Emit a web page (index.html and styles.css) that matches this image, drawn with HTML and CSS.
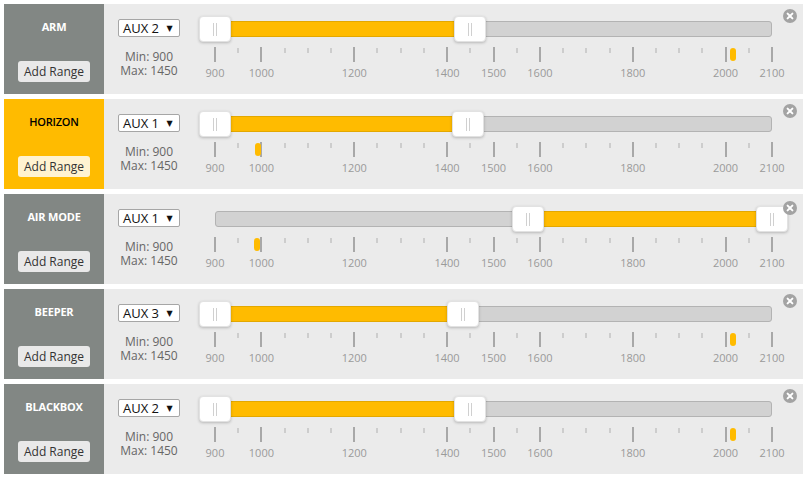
FILE: index.html
```html
<!DOCTYPE html>
<html>
<head>
<meta charset="utf-8">
<link rel="stylesheet" href="styles.css">
</head>
<body>
<div class="list">
  <div class="mode">
    <div class="info"><div class="name">ARM</div><button class="add">Add Range</button></div>
    <div class="chan"><div class="sel">AUX 2 <span class="arr">▼</span></div><div class="rng">Min: 900<br>Max: 1450</div></div>
    <div class="slider"><div class="scale" data-lo="900" data-hi="1450" data-val="2017"></div></div>
    <svg class="close" width="14" height="14" viewBox="0 0 14 14"><circle cx="7" cy="7" r="7" fill="#a3a3a3"/><path d="M4.6 4.6l4.8 4.8M9.4 4.6l-4.8 4.8" stroke="#fff" stroke-width="2" stroke-linecap="round"/></svg>
  </div>
  <div class="mode active">
    <div class="info"><div class="name">HORIZON</div><button class="add">Add Range</button></div>
    <div class="chan"><div class="sel">AUX 1 <span class="arr">▼</span></div><div class="rng">Min: 900<br>Max: 1450</div></div>
    <div class="slider"><div class="scale" data-lo="900" data-hi="1445" data-val="993"></div></div>
    <svg class="close" width="14" height="14" viewBox="0 0 14 14"><circle cx="7" cy="7" r="7" fill="#a3a3a3"/><path d="M4.6 4.6l4.8 4.8M9.4 4.6l-4.8 4.8" stroke="#fff" stroke-width="2" stroke-linecap="round"/></svg>
  </div>
  <div class="mode">
    <div class="info"><div class="name">AIR MODE</div><button class="add">Add Range</button></div>
    <div class="chan"><div class="sel">AUX 1 <span class="arr">▼</span></div><div class="rng">Min: 900<br>Max: 1450</div></div>
    <div class="slider"><div class="scale" data-lo="1575" data-hi="2100" data-val="990"></div></div>
    <svg class="close low" width="14" height="14" viewBox="0 0 14 14"><circle cx="7" cy="7" r="7" fill="#a3a3a3"/><path d="M4.6 4.6l4.8 4.8M9.4 4.6l-4.8 4.8" stroke="#fff" stroke-width="2" stroke-linecap="round"/></svg>
  </div>
  <div class="mode">
    <div class="info"><div class="name">BEEPER</div><button class="add">Add Range</button></div>
    <div class="chan"><div class="sel">AUX 3 <span class="arr">▼</span></div><div class="rng">Min: 900<br>Max: 1450</div></div>
    <div class="slider"><div class="scale" data-lo="900" data-hi="1435" data-val="2017"></div></div>
    <svg class="close" width="14" height="14" viewBox="0 0 14 14"><circle cx="7" cy="7" r="7" fill="#a3a3a3"/><path d="M4.6 4.6l4.8 4.8M9.4 4.6l-4.8 4.8" stroke="#fff" stroke-width="2" stroke-linecap="round"/></svg>
  </div>
  <div class="mode">
    <div class="info"><div class="name">BLACKBOX</div><button class="add">Add Range</button></div>
    <div class="chan"><div class="sel">AUX 2 <span class="arr">▼</span></div><div class="rng">Min: 900<br>Max: 1450</div></div>
    <div class="slider"><div class="scale" data-lo="900" data-hi="1450" data-val="2017"></div></div>
    <svg class="close" width="14" height="14" viewBox="0 0 14 14"><circle cx="7" cy="7" r="7" fill="#a3a3a3"/><path d="M4.6 4.6l4.8 4.8M9.4 4.6l-4.8 4.8" stroke="#fff" stroke-width="2" stroke-linecap="round"/></svg>
  </div>
</div>
<script src="script.js"></script>
</body>
</html>
```
FILE: styles.css
```css
body {
  margin: 0;
  padding: 4px 4px 0;
  background: #fff;
  font-family: "Open Sans", "DejaVu Sans", sans-serif;
}
.list {
  display: flex;
  flex-direction: column;
  gap: 5px;
  width: 799px;
}
.mode {
  display: flex;
  height: 90px;
  background: #ebebeb;
  position: relative;
}
.info {
  width: 100px;
  flex: none;
  background: #828784;
  display: flex;
  flex-direction: column;
  align-items: center;
  padding-top: 14px;
  box-sizing: border-box;
}
.mode.active .info { background: #ffbb00; }
.name {
  color: #fff;
  font-weight: 700;
  font-size: 11px;
  line-height: 18px;
  height: 18px;
  letter-spacing: -0.2px;
}
.mode.active .name { color: #000; font-weight: 600; }
.add {
  margin-top: 25px;
  height: 21px;
  padding: 0 6px;
  border: 0;
  border-radius: 3px;
  background: #e9e9e9;
  color: #333;
  font-family: "Open Sans", sans-serif;
  font-size: 12px;
  line-height: 21px;
}
.mode.active .add { background: #fff3d1; }
.chan {
  width: 90px;
  flex: none;
  display: flex;
  flex-direction: column;
  align-items: center;
  padding-top: 15px;
  box-sizing: border-box;
}
.sel {
  width: 62px;
  height: 18px;
  box-sizing: border-box;
  border: 1px solid #a6a6a6;
  border-radius: 2px;
  background: #fff;
  font-size: 13px;
  line-height: 16px;
  color: #111;
  padding-left: 4px;
  display: flex;
  align-items: center;
  white-space: pre;
}
.arr { font-size: 8px; margin-left: 4px; }
.rng {
  margin-top: 13px;
  font-size: 12px;
  line-height: 14px;
  color: #666;
  text-align: center;
}
.slider {
  flex: 1;
  padding-left: 21px;
}
.scale {
  position: relative;
  width: 557px;
  height: 90px;
}
.track {
  position: absolute;
  top: 17px;
  left: 0;
  right: 0;
  height: 16px;
  box-sizing: border-box;
  background: #d2d2d2;
  border: 1px solid #b3b3b3;
  border-radius: 3px;
}
.fill {
  position: absolute;
  top: 17px;
  height: 16px;
  box-sizing: border-box;
  background: #ffbb00;
  border-top: 1px solid #e3a800;
  border-bottom: 1px solid #e3a800;
}
.handle {
  position: absolute;
  top: 12px;
  width: 32px;
  height: 26px;
  margin-left: -16px;
  box-sizing: border-box;
  background: #fff;
  border: 1px solid #e2e2e2;
  border-radius: 4px;
  box-shadow: 0 1px 3px rgba(0, 0, 0, 0.22);
}
.handle::before,
.handle::after {
  content: "";
  position: absolute;
  top: 6px;
  width: 1px;
  height: 13px;
  background: #d0d0d0;
}
.handle::before { left: 13px; }
.handle::after { left: 16px; }
.tick {
  position: absolute;
  top: 43px;
  width: 2px;
  height: 15px;
  margin-left: -1px;
  background: #a8a8a8;
}
.tick.minor {
  top: 44px;
  width: 2px;
  height: 5px;
  background: #cdcdcd;
}
.lbl {
  position: absolute;
  top: 62px;
  font-size: 11px;
  line-height: 14px;
  color: #9a9a9a;
  transform: translateX(-50%);
}
.val {
  position: absolute;
  top: 44px;
  width: 6px;
  height: 13px;
  margin-left: -3px;
  border-radius: 3px;
  background: #ffbb00;
}
.close {
  position: absolute;
  top: 5px;
  right: 6px;
}
.close.low { top: 7px; }
```
FILE: script.js
```js
(function () {
  var majors = [900, 1000, 1200, 1400, 1500, 1600, 1800, 2000, 2100];
  function pct(v) { return ((v - 900) / 1200 * 100) + '%'; }
  function el(cls, left, text) {
    var d = document.createElement('div');
    d.className = cls;
    if (left !== null) d.style.left = left;
    if (text) d.textContent = text;
    return d;
  }
  document.querySelectorAll('.scale').forEach(function (s) {
    var lo = +s.dataset.lo, hi = +s.dataset.hi, val = +s.dataset.val;
    s.appendChild(el('track', null));
    var f = el('fill', pct(lo));
    f.style.width = ((hi - lo) / 1200 * 100) + '%';
    s.appendChild(f);
    for (var v = 900; v <= 2100; v += 50) {
      var major = majors.indexOf(v) >= 0;
      s.appendChild(el(major ? 'tick' : 'tick minor', pct(v)));
      if (major) s.appendChild(el('lbl', pct(v), String(v)));
    }
    s.appendChild(el('val', pct(val)));
    s.appendChild(el('handle', pct(lo)));
    s.appendChild(el('handle', pct(hi)));
  });
})();
```
